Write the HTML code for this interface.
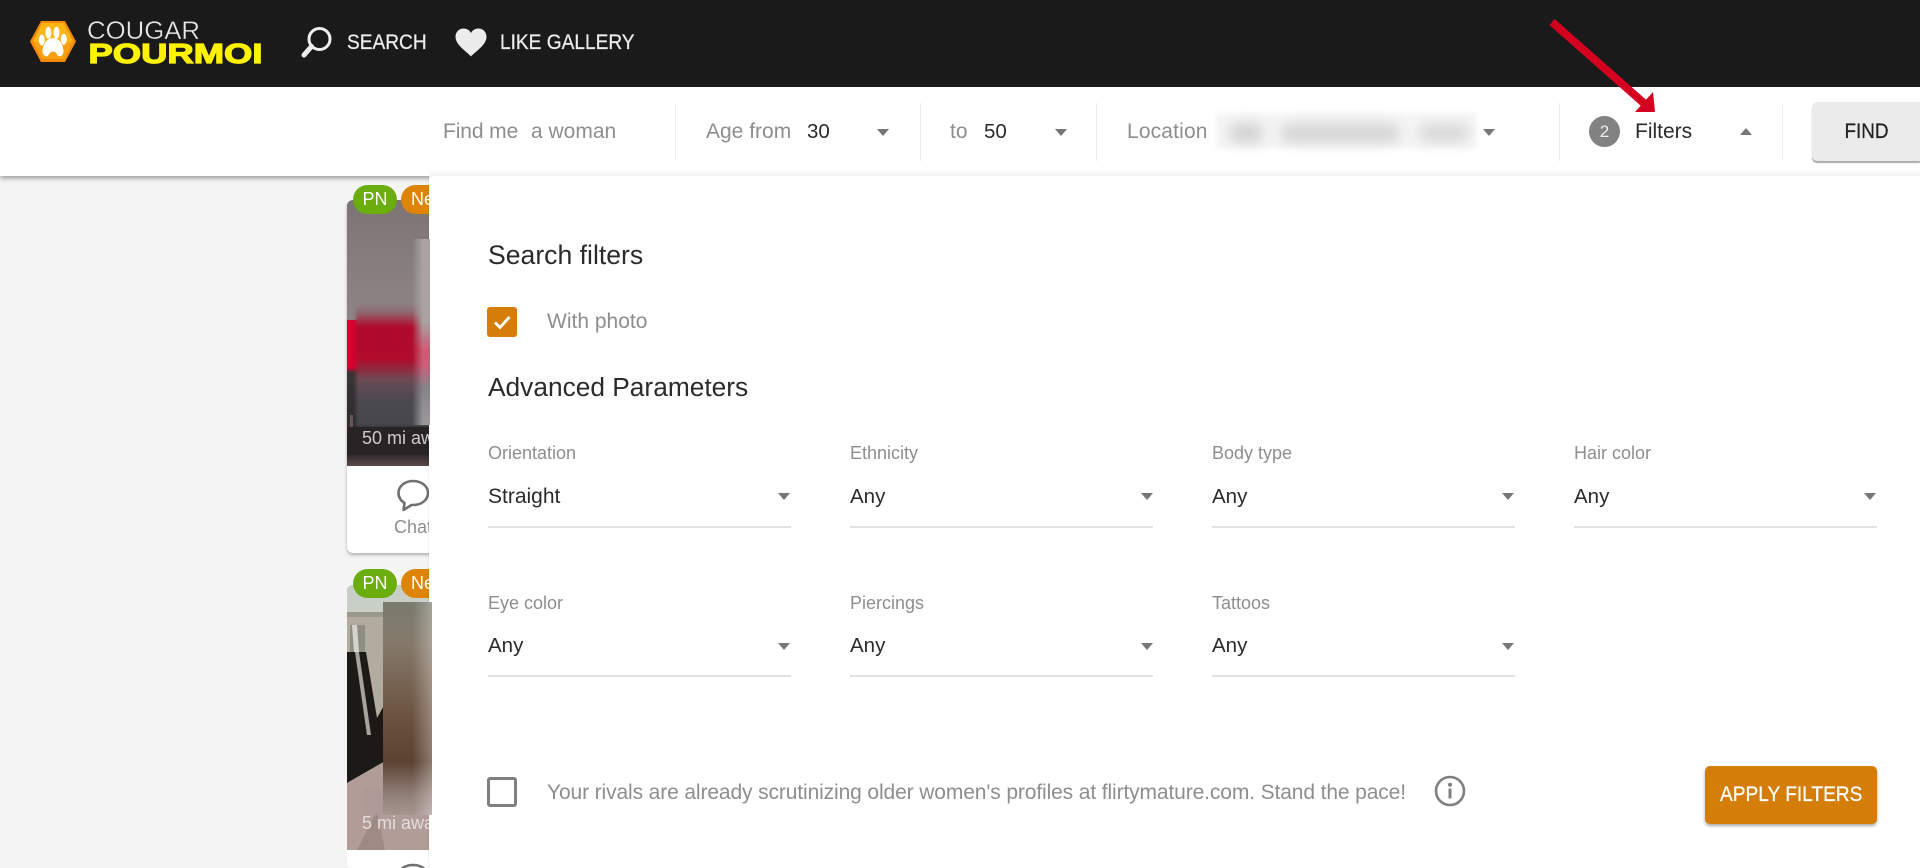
<!DOCTYPE html>
<html lang="en"><head><meta charset="utf-8"><title>Cougar Pourmoi</title>
<style>
html,body{margin:0;padding:0;width:1920px;height:868px;overflow:hidden}
#p{width:1920px;height:868px;position:relative;overflow:hidden;background:#f4f4f4;font-family:"Liberation Sans",sans-serif;color:#2b2b2b}
.a{position:absolute;white-space:nowrap;line-height:1}
.t{position:absolute;white-space:nowrap;line-height:24px;height:24px;font-size:21px}
.g{color:#8e8e8e}
.div{position:absolute;top:103px;width:1px;height:58px;background:#ececec}
.dn{position:absolute;width:0;height:0;border-left:6.5px solid transparent;border-right:6.5px solid transparent;border-top:7px solid #777}
.lab{position:absolute;font-size:18px;line-height:20px;color:#8e8e8e;white-space:nowrap}
.val{position:absolute;font-size:20.5px;line-height:24px;color:#2b2b2b;white-space:nowrap}
.ln{position:absolute;width:303px;height:2px;background:#e2e2e2}
.pill{position:absolute;height:29px;border-radius:15px;color:#fff;font-size:18px;line-height:29px;overflow:hidden}
.sq{display:inline-block;transform:scaleX(.91);font-size:21px;-webkit-text-stroke:.25px currentColor}
</style></head><body><div id="p">

<!-- card 1 -->
<div style="position:absolute;left:347px;top:200px;width:120px;height:353px;background:#fff;border-radius:6px;box-shadow:0 2px 3px rgba(0,0,0,.28)"></div>
<div style="position:absolute;left:347px;top:200px;width:90px;height:266px;background:linear-gradient(#7c7475 0,#8d8586 45%,#d5002e 45.1%,#d5002e 63%,#3a3538 65%,#2f2a2c 85%,#272024 88%,#2a2326 95%,#5a4a48 100%);border-radius:6px 6px 0 0;overflow:hidden">
  <div style="position:absolute;left:9px;top:102px;width:90px;height:125px;background:linear-gradient(#8d8586 0,#8e6a72 8%,#b00a2c 20%,#b00c2c 46%,#6d4a55 62%,#4a4a50 78%,#46464c 100%);filter:blur(1.500px)"></div>
  <div style="position:absolute;left:3px;top:215px;width:3px;height:40px;background:#6b5555"></div>
  <div style="position:absolute;left:0;top:227px;width:90px;height:28px;background:#2a2326"></div>
</div>
<svg style="position:absolute;left:396px;top:478px" width="36" height="36" viewBox="0 0 36 36"><path d="M17 3C8.500 3 2.500 8.500 2.500 15C2.500 19.500 5 22.800 8.500 25L7.500 32L15.500 27C16 27 16.500 27 17 27C26 27 32 21.500 32 15C32 8.500 26 3 17 3Z" fill="none" stroke="#707070" stroke-width="2.600" stroke-linejoin="round"/></svg>
<div class="a g" style="left:394px;top:518px;font-size:18px">Chat</div>
<div class="pill" style="left:401px;top:185px;width:60px;background:#de8406;padding-left:10px;box-sizing:border-box">New</div>
<div class="pill" style="left:353px;top:185px;width:44px;background:#6aad0c;text-align:center">PN</div>

<!-- card 2 -->
<div style="position:absolute;left:347px;top:585px;width:120px;height:283px;background:#fff;border-radius:6px"></div>
<svg style="position:absolute;left:347px;top:585px;border-radius:6px 6px 0 0" width="90" height="265" viewBox="0 0 90 265">
<rect width="90" height="265" fill="#b2ab9f"/>
<rect width="90" height="27" fill="#c8cfc6"/>
<rect y="27" width="90" height="5" fill="#9b998e"/>
<rect x="3" y="40" width="15" height="27" fill="#8f8e84"/>
<polygon points="5,40 10,40 12,67 7,67" fill="#d4d4cc"/>
<polygon points="0,67 19,67 30,133 40,115 40,175 0,198" fill="#1b1a17"/>
<polygon points="8,67 12,67 24,150 20,150" fill="#a4a49c"/>
<polygon points="0,198 40,175 90,175 90,265 0,265" fill="#b29c98"/>
<polygon points="10,265 30,225 38,265" fill="#a08a86"/>
</svg>
<svg style="position:absolute;left:396px;top:863px" width="36" height="10" viewBox="0 0 36 10"><path d="M2.500 12C4 5 10 2 17 2C24 2 30 5 32 12" fill="none" stroke="#707070" stroke-width="2.600"/></svg>
<div class="pill" style="left:401px;top:569px;width:60px;background:#de8406;padding-left:10px;box-sizing:border-box">New</div>
<div class="pill" style="left:353px;top:569px;width:44px;background:#6aad0c;text-align:center">PN</div>

<!-- panel -->
<div style="position:absolute;left:429px;top:176px;width:1491px;height:692px;background:#fff;border-radius:5px 0 0 0;box-shadow:0 0 2px rgba(0,0,0,.12)"></div>

<!-- overlays sitting over the panel edge -->
<div style="position:absolute;left:412px;top:239px;width:18px;height:186px;background:linear-gradient(#a9a3a2 0,#a8a2a1 45%,#cc5a75 60%,#c9607a 68%,#85838a 80%,#9c9a9a 100%);-webkit-mask-image:linear-gradient(90deg,transparent 0,#000 60%);mask-image:linear-gradient(90deg,transparent 0,#000 60%)"></div>
<div class="a" style="left:362px;top:428px;font-size:18px;line-height:20px;color:#cfcbcb;width:67px;overflow:hidden">50 mi away</div>
<div style="position:absolute;left:363px;top:788px;width:30px;height:27px;background:#ad9a97;filter:blur(1px)"></div>
<div class="a" style="left:362px;top:813px;font-size:18px;line-height:20px;color:#e3dcda;width:67px;overflow:hidden">5 mi away</div>
<div style="position:absolute;left:383px;top:602px;width:49px;height:213px;background:linear-gradient(90deg,rgba(255,255,255,0) 60%,rgba(255,255,255,.3) 100%),linear-gradient(#7a7a6e 0,#85796a 20%,#6e5745 50%,#5b4231 75%,#8f7d76 90%,#a6948f 100%)"></div>

<!-- search bar -->
<div style="position:absolute;left:0;top:87px;width:1920px;height:89px;background:#fff;box-shadow:0 2px 5px rgba(0,0,0,.4);clip-path:inset(0 1491px -10px 0)"></div>
<div style="position:absolute;left:429px;top:87px;width:1491px;height:89px;background:linear-gradient(#fff 0,#fff 93%,#f7f7f7 97%,#f5f5f5 100%)"></div>
<!-- header -->
<div style="position:absolute;left:0;top:0;width:1920px;height:87px;background:#1a1a1a"></div>

<!-- logo -->
<svg style="position:absolute;left:29px;top:20px" width="48" height="43" viewBox="0 0 48 43">
<polygon points="12,1 36,1 47,21.500 36,42 12,42 1,21.500" fill="#f58a0a"/>
<polygon points="13,3 35,3 44,21.500 35,39 13,39 4,21.500" fill="#fdb515"/>
<polygon points="24,24 44,21.500 35,39 13,39 4,21.500" fill="#f7a010"/>
<path d="M24 18C18.500 18 13.500 24 13.500 31C13.500 35 16 37 19 36C20 33.500 22 31.500 24 31.500C26 31.500 28 33.500 29 36C32 37 34.500 35 34.500 31C34.500 24 29.500 18 24 18Z" fill="#fff"/>
<ellipse cx="12.700" cy="20" rx="3" ry="5.500" fill="#fff"/><ellipse cx="19.300" cy="12.700" rx="3" ry="6" fill="#fff"/><ellipse cx="27.500" cy="12.700" rx="3" ry="6" fill="#fff"/><ellipse cx="34.800" cy="19.300" rx="3" ry="5.500" fill="#fff"/>
</svg>
<svg style="position:absolute;left:84px;top:16px;overflow:visible" width="190" height="50">
<text x="3" y="23" font-family="Liberation Sans" font-size="25" fill="#e8e8e8" stroke="#1a1a1a" stroke-width=".35" textLength="113" lengthAdjust="spacingAndGlyphs">COUGAR</text>
<text x="4.500" y="47" font-family="Liberation Sans" font-weight="700" font-size="28" fill="#fff200" stroke="#fff200" stroke-width="1.200" textLength="174" lengthAdjust="spacingAndGlyphs">POURMOI</text>
</svg>

<!-- nav -->
<svg style="position:absolute;left:300px;top:26px" width="34" height="33" viewBox="0 0 34 33"><ellipse cx="19.500" cy="13" rx="10.500" ry="10.500" fill="none" stroke="#eee" stroke-width="3"/><path d="M11.500 20.500L4 29" stroke="#eee" stroke-width="5" stroke-linecap="round"/></svg>
<div class="a" style="left:347px;top:32px;line-height:22px;color:#ececec"><span class="sq" style="transform-origin:0 50%">SEARCH</span></div>
<svg style="position:absolute;left:455px;top:28px" width="32" height="29" viewBox="0 0 32 29"><path d="M16 28.500C11 23 .5 17 .5 8.800C.5 3.800 4.300.5 8.500.5C11.500.5 14.500 2 16 5C17.500 2 20.500.5 23.500.5C27.700.5 31.500 3.800 31.500 8.800C31.500 17 21 23 16 28.500Z" fill="#ececec"/></svg>
<div class="a" style="left:500px;top:32px;line-height:22px;color:#ececec"><span class="sq" style="transform-origin:0 50%">LIKE GALLERY</span></div>

<!-- search bar content -->
<div class="t g" style="left:443px;top:120px;letter-spacing:-.1px">Find me</div>
<div class="t g" style="left:531px;top:120px">a woman</div>
<div class="div" style="left:675px"></div>
<div class="t g" style="left:706px;top:120px">Age from</div>
<div class="t" style="left:807px;top:120px;font-size:20.5px">30</div>
<div class="dn" style="left:877px;top:129px"></div>
<div class="div" style="left:920px"></div>
<div class="t g" style="left:950px;top:120px">to</div>
<div class="t" style="left:984px;top:120px;font-size:20.5px">50</div>
<div class="dn" style="left:1055px;top:129px"></div>
<div class="div" style="left:1096px"></div>
<div class="t g" style="left:1127px;top:120px;letter-spacing:.15px">Location</div>
<div style="position:absolute;left:1216px;top:113px;width:260px;height:35px;background:#f6f6f6;filter:blur(2.500px)"></div>
<div style="position:absolute;left:1230px;top:124px;width:32px;height:18px;background:#cfcfcf;filter:blur(7px)"></div>
<div style="position:absolute;left:1282px;top:124px;width:116px;height:18px;background:#d2d2d2;filter:blur(7px)"></div>
<div style="position:absolute;left:1420px;top:124px;width:48px;height:18px;background:#d6d6d6;filter:blur(7px)"></div>
<div class="dn" style="left:1483px;top:129px"></div>
<div class="div" style="left:1559px"></div>
<div style="position:absolute;left:1589px;top:116px;width:31px;height:31px;border-radius:50%;background:#828282;color:#eee;font-size:17px;line-height:31px;text-align:center">2</div>
<div class="t" style="left:1635px;top:120px">Filters</div>
<div style="position:absolute;left:1740px;top:128px;width:0;height:0;border-left:6.500px solid transparent;border-right:6.500px solid transparent;border-bottom:7px solid #777"></div>
<div class="div" style="left:1782px"></div>
<div style="position:absolute;left:1812px;top:102px;width:108px;height:59px;background:#ebebeb;border-radius:5px 0 0 5px;box-shadow:0 2px 1px #aaa;text-align:center;line-height:60px;color:#222"><span class="sq" style="transform:scaleX(.9)">FIND</span></div>

<!-- red arrow -->
<svg style="position:absolute;left:1540px;top:10px" width="125" height="110" viewBox="0 0 125 110"><path d="M12 12L106 95" fill="none" stroke="#d40020" stroke-width="8"/><polygon points="113,82 115,102 95,102" fill="#d40020"/></svg>

<!-- panel content -->
<div class="a" style="left:488px;top:240px;font-size:26.6px;line-height:30px;color:#2b2b2b">Search filters</div>
<div style="position:absolute;left:487px;top:307px;width:30px;height:30px;border-radius:3px;background:#d57d08"></div>
<svg style="position:absolute;left:487px;top:307px" width="30" height="30" viewBox="0 0 30 30"><path d="M8 15.500L13 20.500L22.500 10" fill="none" stroke="#fff" stroke-width="2.800"/></svg>
<div class="t g" style="left:547px;top:310px">With photo</div>
<div class="a" style="left:488px;top:372px;font-size:26.3px;line-height:30px;color:#2b2b2b">Advanced Parameters</div>

<div class="lab" style="left:488px;top:443px">Orientation</div><div class="val" style="left:488px;top:485px;font-size:21px">Straight</div><div class="dn" style="left:778px;top:493px"></div><div class="ln" style="left:488px;top:526px"></div>
<div class="lab" style="left:850px;top:443px">Ethnicity</div><div class="val" style="left:850px;top:485px">Any</div><div class="dn" style="left:1141px;top:493px"></div><div class="ln" style="left:850px;top:526px"></div>
<div class="lab" style="left:1212px;top:443px">Body type</div><div class="val" style="left:1212px;top:485px">Any</div><div class="dn" style="left:1502px;top:493px"></div><div class="ln" style="left:1212px;top:526px"></div>
<div class="lab" style="left:1574px;top:443px">Hair color</div><div class="val" style="left:1574px;top:485px">Any</div><div class="dn" style="left:1864px;top:493px"></div><div class="ln" style="left:1574px;top:526px"></div>

<div class="lab" style="left:488px;top:593px">Eye color</div><div class="val" style="left:488px;top:634px">Any</div><div class="dn" style="left:778px;top:643px"></div><div class="ln" style="left:488px;top:675px"></div>
<div class="lab" style="left:850px;top:593px">Piercings</div><div class="val" style="left:850px;top:634px">Any</div><div class="dn" style="left:1141px;top:643px"></div><div class="ln" style="left:850px;top:675px"></div>
<div class="lab" style="left:1212px;top:593px">Tattoos</div><div class="val" style="left:1212px;top:634px">Any</div><div class="dn" style="left:1502px;top:643px"></div><div class="ln" style="left:1212px;top:675px"></div>

<div style="position:absolute;left:487px;top:777px;width:30px;height:30px;box-sizing:border-box;border:3px solid #808080;border-radius:3px"></div>
<div class="t g" style="left:547px;top:781px;letter-spacing:-.12px">Your rivals are already scrutinizing older women's profiles at flirtymature.com. Stand the pace!</div>
<svg style="position:absolute;left:1434px;top:775px" width="32" height="32" viewBox="0 0 32 32"><circle cx="16" cy="16" r="14" fill="none" stroke="#808080" stroke-width="2.600"/><circle cx="16" cy="9.800" r="2" fill="#808080"/><rect x="14.500" y="13.500" width="3" height="10" fill="#808080"/></svg>
<div style="position:absolute;left:1705px;top:766px;width:172px;height:58px;border-radius:5px;background:#d47d08;box-shadow:0 2px 3px rgba(0,0,0,.35);color:#fff;line-height:58px;text-align:center"><span class="sq" style="white-space:nowrap">APPLY FILTERS</span></div>

</div></body></html>
